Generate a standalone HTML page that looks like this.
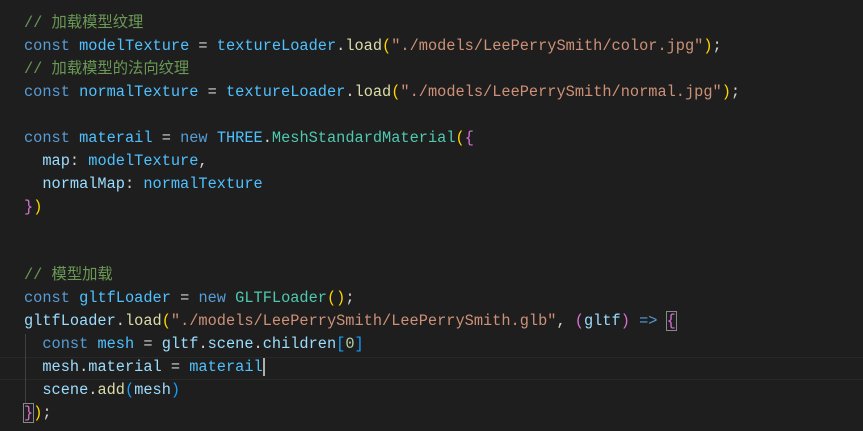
<!DOCTYPE html><html><head><style>
body{margin:0;background:#1e1e1e;width:863px;height:431px;overflow:hidden}
pre{margin:0;position:absolute;left:24px;top:12px;font-family:"Liberation Mono","Noto Sans CJK SC",monospace;font-size:15.3px;line-height:22.95px;color:#d4d4d4}
.c{color:#6a9955}.k{color:#569cd6}.v{color:#4fc1ff}.p{color:#9cdcfe}.f{color:#dcdcaa}.s{color:#ce9178}.t{color:#4ec9b0}.y{color:#ffd700}.m{color:#da70d6}.b{color:#179fff}.n{color:#b5cea8}
.g{position:absolute;left:25px;width:1px;background:#404040}
.hl{position:absolute;left:0;right:0;top:357px;height:21px;border-top:1px solid #282828;border-bottom:1px solid #282828}
</style></head><body>
<div class="hl"></div>
<div class="g" style="top:334px;height:69px"></div>
<pre><span class="c">// 加载模型纹理</span>
<span class="k">const</span> <span class="v">modelTexture</span> = <span class="v">textureLoader</span>.<span class="f">load</span><span class="y">(</span><span class="s">"./models/LeePerrySmith/color.jpg"</span><span class="y">)</span>;
<span class="c">// 加载模型的法向纹理</span>
<span class="k">const</span> <span class="v">normalTexture</span> = <span class="v">textureLoader</span>.<span class="f">load</span><span class="y">(</span><span class="s">"./models/LeePerrySmith/normal.jpg"</span><span class="y">)</span>;

<span class="k">const</span> <span class="v">materail</span> = <span class="k">new</span> <span class="v">THREE</span>.<span class="t">MeshStandardMaterial</span><span class="y">(</span><span class="m">{</span>
  <span class="p">map</span>: <span class="v">modelTexture</span>,
  <span class="p">normalMap</span>: <span class="v">normalTexture</span>
<span class="m">}</span><span class="y">)</span>


<span class="c">// 模型加载</span>
<span class="k">const</span> <span class="v">gltfLoader</span> = <span class="k">new</span> <span class="t">GLTFLoader</span><span class="y">()</span>;
<span class="p">gltfLoader</span>.<span class="f">load</span><span class="y">(</span><span class="s">"./models/LeePerrySmith/LeePerrySmith.glb"</span>, <span class="m">(</span><span class="p">gltf</span><span class="m">)</span> <span class="k">=&gt;</span> <span class="m" style="outline:1px solid #888">{</span>
  <span class="k">const</span> <span class="v">mesh</span> = <span class="p">gltf</span>.<span class="p">scene</span>.<span class="p">children</span><span class="b">[</span><span class="n">0</span><span class="b">]</span>
  <span class="p">mesh</span>.<span class="p">material</span> = <span class="v">materail</span><span style="border-left:2px solid #aeafad"></span>
  <span class="p">scene</span>.<span class="f">add</span><span class="b">(</span><span class="p">mesh</span><span class="b">)</span>
<span class="m" style="outline:1px solid #888">}</span><span class="y">)</span>;</pre>
</body></html>
